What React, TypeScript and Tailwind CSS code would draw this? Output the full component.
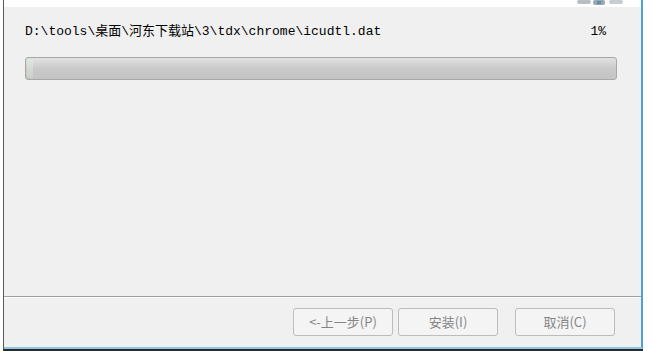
import React from "react";

const mono = { fontFamily: '"Liberation Mono", "Noto Sans CJK SC", monospace' };

function Btn({ label, className = "" }: { label: string; className?: string }) {
  return (
    <div
      className={`w-[100px] h-[28px] flex items-center justify-center rounded-[3px] border border-[#bdbdbd] bg-[#f4f4f4] text-[13px] text-[#858585] ${className}`}
      style={{ fontFamily: '"Noto Sans CJK SC", "Liberation Sans", sans-serif' }}
    >
      {label}
    </div>
  );
}

export default function App() {
  return (
    <div className="w-[659px] h-[351px] bg-white overflow-hidden">
      <div className="ml-[3px] w-[640px] h-[351px] border-l border-[#5a5a5a] border-b-2 border-b-[#2a2a2a] flex flex-col">
        <div className="flex-1 flex flex-col border-r-2 border-r-[#4aa3d6] border-b-2 border-b-[#8cc6e6]">
          <div className="h-[7px] bg-white relative">
            <svg className="absolute left-[571px] top-0" width="52" height="6" viewBox="0 0 52 6">
              <rect x="2" y="0" width="14" height="4" rx="2" fill="#b8bec4" />
              <rect x="18" y="0" width="12" height="5" rx="2" fill="#9aa7b3" />
              <rect x="22" y="1" width="4" height="3" fill="#5e8fb0" />
              <rect x="34" y="0" width="14" height="4" rx="2" fill="#c8cccf" />
            </svg>
          </div>
          <div className="flex-1 bg-[#f0f0f0] flex flex-col">
            <div className="flex items-center justify-between pl-[21px] pr-[35px] pt-[14px] h-[36px] text-[13px] text-black" style={mono}>
              <span className="whitespace-nowrap">D:\tools\桌面\河东下载站\3\tdx\chrome\icudtl.dat</span>
              <span>1%</span>
            </div>
            <div className="ml-[21px] mt-[14px] w-[592px] h-[23px] rounded-[3px] border border-[#a8a8a8] bg-gradient-to-b from-[#e2e2e2] via-[#cacaca] to-[#c4c4c4] flex p-[1px]">
              <div className="w-[6px] h-full rounded-l-[2px] bg-gradient-to-b from-[#dfe8df] to-[#c8d2c8]" />
            </div>
            <div className="flex-1" />
          </div>
          <div className="h-[2px] flex flex-col">
            <div className="h-px bg-[#a0a0a0]" />
            <div className="h-px bg-white" />
          </div>
          <div className="h-[49px] bg-[#f0f0f0] flex items-start pt-[10px] pl-[289px]">
            <Btn label="<-上一步(P)" />
            <Btn label="安装(I)" className="ml-[5px]" />
            <Btn label="取消(C)" className="ml-[17px]" />
          </div>
        </div>
      </div>
    </div>
  );
}
